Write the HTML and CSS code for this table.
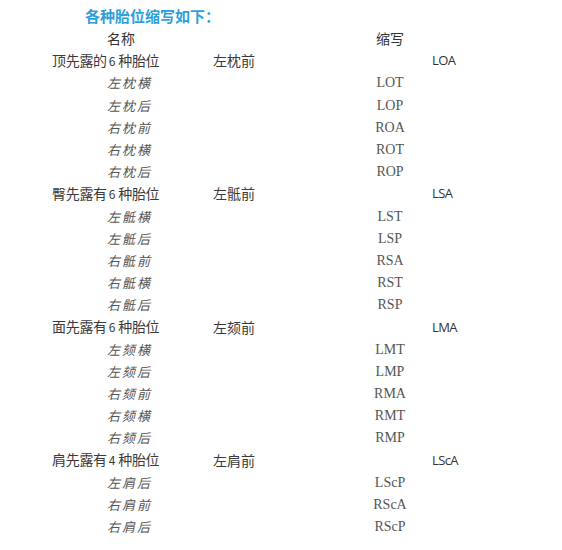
FILE: index.html
```html
<!DOCTYPE html>
<html lang="zh">
<head>
<meta charset="utf-8">
<link rel="stylesheet" href="styles.css">
</head>
<body>
<div class="page">
  <div class="title">各种胎位缩写如下：</div>
  <div class="table">
    <div class="hname">名称</div><div></div><div class="habbr">缩写</div><div></div>

    <div class="gname">顶先露的<span class="num">6</span>种胎位</div><div class="gfirst">左枕前</div><div></div><div class="gabbr">LOA</div>
    <div class="sname">左枕横</div><div></div><div class="sabbr">LOT</div><div></div>
    <div class="sname">左枕后</div><div></div><div class="sabbr">LOP</div><div></div>
    <div class="sname">右枕前</div><div></div><div class="sabbr">ROA</div><div></div>
    <div class="sname">右枕横</div><div></div><div class="sabbr">ROT</div><div></div>
    <div class="sname">右枕后</div><div></div><div class="sabbr">ROP</div><div></div>

    <div class="gname">臀先露有<span class="num">6</span>种胎位</div><div class="gfirst">左骶前</div><div></div><div class="gabbr">LSA</div>
    <div class="sname">左骶横</div><div></div><div class="sabbr">LST</div><div></div>
    <div class="sname">左骶后</div><div></div><div class="sabbr">LSP</div><div></div>
    <div class="sname">右骶前</div><div></div><div class="sabbr">RSA</div><div></div>
    <div class="sname">右骶横</div><div></div><div class="sabbr">RST</div><div></div>
    <div class="sname">右骶后</div><div></div><div class="sabbr">RSP</div><div></div>

    <div class="gname">面先露有<span class="num">6</span>种胎位</div><div class="gfirst">左颏前</div><div></div><div class="gabbr">LMA</div>
    <div class="sname">左颏横</div><div></div><div class="sabbr">LMT</div><div></div>
    <div class="sname">左颏后</div><div></div><div class="sabbr">LMP</div><div></div>
    <div class="sname">右颏前</div><div></div><div class="sabbr">RMA</div><div></div>
    <div class="sname">右颏横</div><div></div><div class="sabbr">RMT</div><div></div>
    <div class="sname">右颏后</div><div></div><div class="sabbr">RMP</div><div></div>

    <div class="gname">肩先露有<span class="num">4</span>种胎位</div><div class="gfirst">左肩前</div><div></div><div class="gabbr">LScA</div>
    <div class="sname">左肩后</div><div></div><div class="sabbr">LScP</div><div></div>
    <div class="sname">右肩前</div><div></div><div class="sabbr">RScA</div><div></div>
    <div class="sname">右肩后</div><div></div><div class="sabbr">RScP</div><div></div>
  </div>
</div>
</body>
</html>
```

FILE: styles.css
```css
html, body {
  margin: 0;
  padding: 0;
  background: #ffffff;
}

.page {
  padding: 4px 0 0 52px;
  font-family: "Noto Sans CJK SC", "Noto Sans", sans-serif;
  color: #3d3d3d;
}

.title {
  margin-left: 33px;
  height: 23px;
  line-height: 23px;
  font-size: 15px;
  font-weight: bold;
  color: #2d9fd9;
}

.table {
  display: grid;
  grid-template-columns: 161px 147px 60px auto;
  grid-auto-rows: 22.2px;
  align-items: center;
  font-size: 14px;
}

.table > div {
  line-height: 22px;
  white-space: nowrap;
}

.hname {
  padding-left: 55px;
  color: #333;
}

.habbr {
  text-align: center;
  color: #333;
}

.gname {
  color: #3a3a3a;
  letter-spacing: -0.3px;
}

.num {
  font-size: 12px;
  margin: 0 3px 0 2px;
}

.gfirst {
  color: #3a3a3a;
}

.gabbr {
  padding-left: 12px;
  font-family: "Open Sans", "Noto Sans", sans-serif;
  font-size: 13px;
  letter-spacing: -0.6px;
  color: #333;
}

.sname {
  padding: 2px 0 0 55px;
  font-size: 13px;
  letter-spacing: 2px;
  color: #555;
  font-style: italic;
}

.sabbr {
  padding-top: 2px;
  text-align: center;
  font-family: "Liberation Serif", "DejaVu Serif", serif;
  font-size: 14px;
  color: #555;
}
```
